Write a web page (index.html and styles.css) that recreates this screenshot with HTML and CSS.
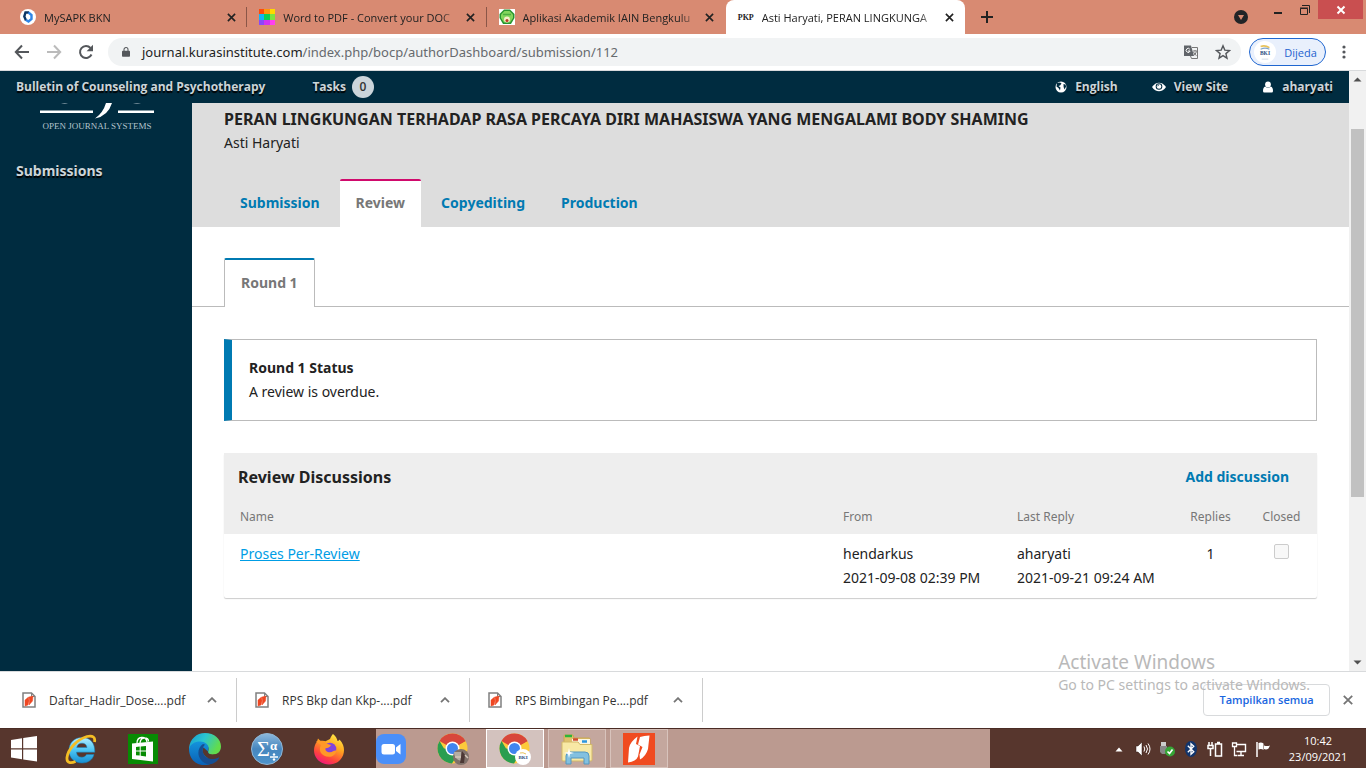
FILE: index.html
```
<!DOCTYPE html>
<html lang="en">
<head>
  <meta charset="UTF-8">
  <title>Asti Haryati, PERAN LINGKUNGAN</title>
  <link rel="stylesheet" href="styles.css">
</head>
<body>

<!-- tabs -->
<div class="tabstrip">
  <div class="tabs">
    <div class="tab">
      <svg class="favicon" viewBox="0 0 16 16"><circle cx="8" cy="8" r="8" fill="#fff"/><path d="M9 3.500H5.500L4.300 7.500 6 11.500" fill="none" stroke="#0b3564" stroke-width="2.400"/><path d="M8.500 3.500l3 2.500v4l-3 2.500L6 11" fill="none" stroke="#2f86e8" stroke-width="2.400"/></svg>
      <span class="tab-title">MySAPK BKN</span>
      <button class="tab-close" aria-label="Close"><svg viewBox="0 0 10 10"><path d="M1 1l8 8M9 1l-8 8"/></svg></button>
    </div>
    <div class="tab">
      <svg class="favicon" viewBox="0 0 16 16"><path d="M0 0h5v5H0z" fill="#ff4b0a"/><path d="M5 0h6v5H5z" fill="#ff960a"/><path d="M11 0h5v5h-5z" fill="#ffd800"/><path d="M0 5h5v6H0z" fill="#12b4f5"/><path d="M5 5h6v6H5z" fill="#0bcf55"/><path d="M11 5h5v6h-5z" fill="#7fe33f"/><path d="M0 11h5v5H0z" fill="#8a48f8"/><path d="M5 11h6v5H5z" fill="#d033f0"/><path d="M11 11h5v5h-5z" fill="#ff40f0"/></svg>
      <span class="tab-title">Word to PDF - Convert your DOC</span>
      <button class="tab-close" aria-label="Close"><svg viewBox="0 0 10 10"><path d="M1 1l8 8M9 1l-8 8"/></svg></button>
    </div>
    <div class="tab">
      <svg class="favicon" viewBox="0 0 16 16"><path d="M0 0h16v16H0z" fill="#fff"/><path d="M5 .5h6L15.500 5v4L12 15H4L.5 9V5z" fill="#27942f"/><path d="M5.500 2h5L14 5.500V9l-3 4.500H5L2 9V5.500z" fill="#83d65c"/><path d="M4 5.500h8" stroke="#4caf40" stroke-width="1.500"/><circle cx="8" cy="10.500" r="3" fill="#f4efc9"/><circle cx="8" cy="11.500" r="1.500" fill="#b63a24"/></svg>
      <span class="tab-title">Aplikasi Akademik IAIN Bengkulu</span>
      <button class="tab-close" aria-label="Close"><svg viewBox="0 0 10 10"><path d="M1 1l8 8M9 1l-8 8"/></svg></button>
    </div>
    <div class="tab active">
      <span class="pkp">PKP</span>
      <span class="tab-title">Asti Haryati, PERAN LINGKUNGA</span>
      <button class="tab-close" aria-label="Close"><svg viewBox="0 0 10 10"><path d="M1 1l8 8M9 1l-8 8"/></svg></button>
    </div>
  </div>
  <button class="new-tab" aria-label="New tab"><svg viewBox="0 0 12 12"><path d="M6 0v12M0 6h12" stroke="#222" stroke-width="2"/></svg></button>
  <div class="window-buttons">
    <button class="media" aria-label="Search tabs"><svg viewBox="0 0 14 14"><circle cx="7" cy="7" r="7" fill="#222427"/><path d="M4 5h6L7 10z" fill="#d88a72"/></svg></button>
    <button class="win" aria-label="Minimize"><svg viewBox="0 0 10 10"><path d="M1 8h8" stroke="#222" stroke-width="2"/></svg></button>
    <button class="win" aria-label="Restore"><svg viewBox="0 0 10 10"><path d="M.5 3.500h7v6h-7zM2 .5h7.500V8" fill="none" stroke="#222"/><path d="M0 3h8" stroke="#222"/></svg></button>
    <button class="win close" aria-label="Close window"><svg viewBox="0 0 10 10"><path d="M1.500 1.500l7 7M8.500 1.500l-7 7" stroke="#fff" stroke-width="2"/></svg></button>
  </div>
</div>

<!-- address bar -->
<div class="toolbar">
  <button class="nav-btn" aria-label="Back"><svg viewBox="0 0 16 16"><path d="M15 8H2M8 1.500L1.800 8 8 14.500" fill="none" stroke="#54575b" stroke-width="2"/></svg></button>
  <button class="nav-btn" aria-label="Forward"><svg viewBox="0 0 16 16"><path d="M1 8h13M8 1.500L14.200 8 8 14.500" fill="none" stroke="#bbb" stroke-width="2"/></svg></button>
  <button class="nav-btn" aria-label="Reload"><svg viewBox="0 0 16 16"><path d="M13.500 10.500A6 6 0 1 1 12.500 4" fill="none" stroke="#54575b" stroke-width="2"/><path d="M15 .8v6.400H8.600z" fill="#54575b"/></svg></button>
  <div class="omnibox">
    <svg class="lock" viewBox="0 0 10 12"><path d="M1 4.500h8q1 0 1 1V11q0 1-1 1H1q-1 0-1-1V5.500q0-1 1-1z" fill="#54575b"/><path d="M2.500 5V3a2.500 2.500 0 0 1 5 0v2" fill="none" stroke="#54575b" stroke-width="1.300"/></svg>
    <a class="url" href="#">journal.kurasinstitute.com<span>/index.php/bocp/authorDashboard/submission/112</span></a>
    <svg class="omni-icon" viewBox="0 0 16 16"><path d="M1 1.500h7l3 10.500H1z" fill="#606469"/><path d="M9 3.500h5.500v11H8.500l-1-2.500" fill="none" stroke="#777"/><path d="M10 7h4M12 6v1M13.500 7.500q-1 3-3 4M10.500 8q1 2.500 3 3.500" fill="none" stroke="#777"/><path d="M6.800 5.200a2 2 0 1 0 .3 1.800H5" fill="none" stroke="#fff"/></svg>
    <svg class="omni-icon" viewBox="0 0 16 16"><path d="M8 1.800l1.800 4.300 4.700.4-3.600 3.100 1.100 4.600L8 11.700l-4 2.500 1.100-4.600-3.600-3.100 4.700-.4z" fill="none" stroke="#54575b" stroke-width="1.400"/></svg>
  </div>
  <button class="profile"><svg viewBox="0 0 20 20"><circle cx="10" cy="10" r="10" fill="#fff"/><path d="M6 5q4-1.500 8 1" fill="none" stroke="#e8c35c" stroke-width="1.500"/><path d="M6 7.500q4-2 8 0" fill="none" stroke="#80a4c8"/><text x="10" y="13" text-anchor="middle" class="bki">BKI</text><path d="M7 16.500h6" stroke="#bccbdc" stroke-width=".6"/></svg>Dijeda</button>
  <button class="menu" aria-label="Menu"><svg viewBox="0 0 4 14"><circle cx="2" cy="2" r="1.600"/><circle cx="2" cy="7" r="1.600"/><circle cx="2" cy="12" r="1.600"/></svg></button>
</div>

<!-- page -->
<div class="viewport">
  <div class="page">
    <div class="topbar">
      <a class="site-name" href="#">Bulletin of Counseling and Psychotherapy</a>
      <a class="tasks" href="#">Tasks <span>0</span></a>
      <div class="user-nav">
        <a href="#"><svg viewBox="0 0 12 12"><circle cx="6" cy="6" r="5.500"/><path d="M2 2l3-.6 1.500 1.200L5 4.500 3.500 5l2 1.500L5 9.500 3.500 7 1.500 5.500zM8.500 3l2 .5.600 2-1.500 3-1-2.500z" fill="#002c40"/></svg>English</a>
        <a href="#"><svg viewBox="0 0 14 12"><path d="M0 6q3-4.300 7-4.300T14 6q-3 4.300-7 4.300T0 6z"/><circle cx="7" cy="5.500" r="3.300" fill="#002c40"/><circle cx="7" cy="5.500" r="2.300"/><path d="M5.700 5.300a1.300 1.300 0 0 1 1.300-1.300" fill="none" stroke="#002c40" stroke-width=".7"/></svg>View Site</a>
        <a href="#"><svg viewBox="0 0 12 12"><circle cx="6" cy="3.500" r="2.900"/><path d="M3.300 5.500Q6 8 8.700 5.500 11 6 11 10q0 1.500-1.300 1.500H2.300Q1 11.500 1 10 1 6 3.300 5.500z"/></svg>aharyati</a>
      </div>
    </div>
    <div class="columns">
      <div class="sidebar">
        <a class="logo" href="#" aria-label="Open Journal Systems">
          <svg viewBox="0 0 114 28"><path d="M21 0h7q-3 1.500-7 0zM93 0h8q-4 1.500-8 0z" fill="#91a6b0"/><path d="M0 7.500h53v2.500H0zM78 7.500h36v2.500H78z" fill="#fff"/><path d="M66 0h6q-4 13-17 15.500Q63 10 66 0z" fill="#fff"/><text x="57" y="25.500" text-anchor="middle" class="logo-text">OPEN JOURNAL SYSTEMS</text></svg>
        </a>
        <a class="side-link" href="#">Submissions</a>
      </div>
      <div class="main">
        <div class="work-header">
          <h1>PERAN LINGKUNGAN TERHADAP RASA PERCAYA DIRI MAHASISWA YANG MENGALAMI BODY SHAMING</h1>
          <p>Asti Haryati</p>
          <div class="stages">
            <a href="#">Submission</a>
            <a href="#" class="current">Review</a>
            <a href="#">Copyediting</a>
            <a href="#">Production</a>
          </div>
        </div>
        <div class="rounds"><a href="#">Round 1</a></div>
        <div class="content">
          <div class="status">
            <h2>Round 1 Status</h2>
            <p>A review is overdue.</p>
          </div>
          <div class="grid">
            <div class="grid-head">
              <h2>Review Discussions</h2>
              <a href="#">Add discussion</a>
            </div>
            <table>
              <thead>
                <tr><th>Name</th><th class="col-date">From</th><th class="col-date">Last Reply</th><th class="col-small">Replies</th><th class="col-small">Closed</th></tr>
              </thead>
              <tbody>
                <tr>
                  <td><a href="#">Proses Per-Review</a></td>
                  <td>hendarkus<br>2021-09-08 02:39 PM</td>
                  <td>aharyati<br>2021-09-21 09:24 AM</td>
                  <td class="center">1</td>
                  <td class="center"><input type="checkbox" aria-label="Closed" disabled></td>
                </tr>
              </tbody>
            </table>
          </div>
        </div>
      </div>
    </div>
  </div>
  <div class="scrollbar">
    <svg viewBox="0 0 17 17"><path d="M4.500 10.500h8l-4-4z" fill="#505050"/></svg>
    <div class="track"><div class="thumb"></div></div>
    <svg viewBox="0 0 17 17"><path d="M4.500 6.500h8l-4 4z" fill="#505050"/></svg>
  </div>
</div>

<!-- downloads -->
<div class="downloads">
  <div class="download">
    <svg class="pdf" viewBox="0 0 14 16"><path d="M1 1h8.500L13 4.500V15H1z" fill="#fff" stroke="#808080" stroke-width="1.500"/><path d="M9.500 1v3.500H13" fill="none" stroke="#808080"/><path d="M6.500 5L3 8v6l3-1 1-4zM7 5l4-1-.5 5-3.500 4 .5-4z" fill="#ee4722" stroke="#ee4722" stroke-width=".5"/></svg>
    <a href="#">Daftar_Hadir_Dose....pdf</a>
    <button aria-label="Options"><svg viewBox="0 0 10 6"><path d="M1 5.200l4-4 4 4" fill="none" stroke="#757575" stroke-width="1.800"/></svg></button>
  </div>
  <div class="download">
    <svg class="pdf" viewBox="0 0 14 16"><path d="M1 1h8.500L13 4.500V15H1z" fill="#fff" stroke="#808080" stroke-width="1.500"/><path d="M9.500 1v3.500H13" fill="none" stroke="#808080"/><path d="M6.500 5L3 8v6l3-1 1-4zM7 5l4-1-.5 5-3.500 4 .5-4z" fill="#ee4722" stroke="#ee4722" stroke-width=".5"/></svg>
    <a href="#">RPS Bkp dan Kkp-....pdf</a>
    <button aria-label="Options"><svg viewBox="0 0 10 6"><path d="M1 5.200l4-4 4 4" fill="none" stroke="#757575" stroke-width="1.800"/></svg></button>
  </div>
  <div class="download">
    <svg class="pdf" viewBox="0 0 14 16"><path d="M1 1h8.500L13 4.500V15H1z" fill="#fff" stroke="#808080" stroke-width="1.500"/><path d="M9.500 1v3.500H13" fill="none" stroke="#808080"/><path d="M6.500 5L3 8v6l3-1 1-4zM7 5l4-1-.5 5-3.500 4 .5-4z" fill="#ee4722" stroke="#ee4722" stroke-width=".5"/></svg>
    <a href="#">RPS Bimbingan Pe....pdf</a>
    <button aria-label="Options"><svg viewBox="0 0 10 6"><path d="M1 5.200l4-4 4 4" fill="none" stroke="#757575" stroke-width="1.800"/></svg></button>
  </div>
  <button class="show-all">Tampilkan semua</button>
  <button class="close-bar" aria-label="Close"><svg viewBox="0 0 10 10"><path d="M.8.800l8.400 8.400M9.200.800L.8 9.200" stroke="#757575" stroke-width="1.800"/></svg></button>
</div>

<!-- taskbar -->
<div class="taskbar">
  <button class="start" aria-label="Start"><svg width="26" height="26" viewBox="0 0 26 26" fill="#fff"><path d="M0 4l11-1.700V12.300H0zM12.200 2.100L26 0v12.300H12.200zM0 13.500h11v9.800L0 21.600zM12.200 13.500H26V25.500l-13.800-2z"/></svg></button>
  <button aria-label="Internet Explorer"><svg width="32" height="32" viewBox="0 0 32 32">
    <defs><linearGradient id="ie" x1="0" y1="0" x2="0" y2="1"><stop offset="0" stop-color="#b5edff"/><stop offset=".5" stop-color="#4cc5f4"/><stop offset="1" stop-color="#168ed2"/></linearGradient></defs>
    <path d="M17 4.500C9 4.500 4 10 4 17.500S9.500 30 17 30c6 0 10.500-3 12-8.500h-7.500c-1 2-2.500 2.700-4.500 2.700-3.500 0-5.300-2-5.500-5H29.800C30 10 25.500 4.500 17 4.500zm-5.300 10c.6-2.800 2.500-4.300 5.300-4.300s4.600 1.500 5 4.300z" fill="url(#ie)" stroke="#1481b8" stroke-width=".5"/>
    <path d="M29.500 9C30.500 4.500 28 2 22 3.500 12 6.500 3 16 2 24.500c-.5 5 3 6.500 8.500 4" fill="none" stroke="#f4bd24" stroke-width="2.800"/></svg></button>
  <button aria-label="Store"><svg width="30" height="30" viewBox="0 0 30 30"><path d="M0 0h30v30H0z" fill="#078b03"/><path d="M4 9.500L25 7.500v20L4 25z" fill="#fff"/><path d="M9 9q0-5 4.500-5.500T19 8M12 9q.5-5 4.500-5t4 3.500" fill="none" stroke="#fff" stroke-width="1.300"/><path d="M8 13l3.700-.4v4H8zM12.700 12.500L18 12v4.600h-5.300zM8 17.600h3.700v4L8 21.200zM12.700 17.600H18v4.800l-5.300-.6z" fill="#078b03"/></svg></button>
  <button aria-label="Edge"><svg width="32" height="32" viewBox="0 0 32 32">
    <defs><linearGradient id="e1" x1="0" y1="0" x2="1" y2=".4"><stop offset="0" stop-color="#159bd2"/><stop offset=".5" stop-color="#2bc5d0"/><stop offset="1" stop-color="#62dc4c"/></linearGradient><linearGradient id="e2" x1="0" y1="0" x2="0" y2="1"><stop offset="0" stop-color="#1493dc"/><stop offset="1" stop-color="#0a60b4"/></linearGradient></defs>
    <path d="M0 15C1 6 7.500 0 16 0c9.500 0 16 6 16 13.500 0 5-3.500 8-8 8-3.500 0-5.800-1.300-5-3 1.500-3 .5-7.500-6-7.500C7 11 2 13 0 17z" fill="url(#e1)"/>
    <path d="M0 16c1-5 6-7.500 11-7.500 5.500 0 9 3.500 8.500 7-.7 4 .5 6 .5 6l-3 6.500 4 3.300C8 35 0 26 0 16z" fill="url(#e2)"/>
    <path d="M14 11C8.500 15 8 22 12 27c4 4.500 9 5.500 13 3 3-1.500 5-4 5.200-5.500-.5-.8-2 .5-4 1-7 1.500-12.500-2.500-12.500-8 0-3 1-5 2.500-5.700z" fill="#174e91"/>
    <path d="M14.500 14.500c-2 4 0 8.500 5 10.500 4 1.500 8 .5 10-.5-1-1.200-1.500-3-4-3-4 .6-7-1-6.500-3z" fill="#57362d"/></svg></button>
  <button aria-label="Math Input"><svg width="32" height="32" viewBox="0 0 32 32">
    <defs><linearGradient id="sg" x1="0" y1="0" x2="0" y2="1"><stop offset="0" stop-color="#8db8dc"/><stop offset=".5" stop-color="#4686be"/><stop offset="1" stop-color="#4f95cc"/></linearGradient></defs>
    <circle cx="16" cy="16" r="15.500" fill="url(#sg)" stroke="#91b7d4"/><text x="6" y="23" class="sigma">Σ</text><text x="19" y="17" class="alpha">α</text><path d="M19 24h8" stroke="#fff" stroke-width="1.500"/><circle cx="23" cy="21.500" r="1.200" fill="#fff"/><circle cx="23" cy="26.500" r="1.200" fill="#fff"/></svg></button>
  <button aria-label="Firefox"><svg width="32" height="32" viewBox="0 0 32 32">
    <defs><linearGradient id="ff" x1=".8" y1="0" x2=".3" y2="1"><stop offset="0" stop-color="#fff04a"/><stop offset=".4" stop-color="#ffa51f"/><stop offset=".75" stop-color="#ff453d"/><stop offset="1" stop-color="#f0167f"/></linearGradient></defs>
    <path d="M20 1c3 2.500 4 4.500 4.500 7 1.500-.3 2-1.500 2-1.500C30 10 31 14 31 17c0 8.500-6.500 14.500-15 14.500S1 25 1 17.500c0-3.500 1-6.500 3-9l1-3 2.500 2.500c2-.5 4-.2 5 .3L17 6c1-2.500 2-4 3-5z" fill="url(#ff)"/>
    <circle cx="17" cy="16" r="6.300" fill="#8143dc"/><path d="M3 8.500c4-1.500 8-1 10 2l5 1.500c-1 2.500-3.500 3-5.500 3.200-.5 2 1 4 4.500 4 3 0 4-2.500 6.500-1.500-1 4-4 6-7.500 6C8 23.700 5 17 8 12z" fill="#ff9828"/></svg></button>
  <button aria-label="Zoom"><svg width="30" height="30" viewBox="0 0 30 30"><rect width="30" height="30" rx="8" fill="#4a8ff9"/><rect x="5.500" y="10" width="13.500" height="10.500" rx="2.500" fill="#fff"/><path d="M20 13.500l4.500-3.500v10.500L20 17z" fill="#fff"/></svg></button>
  <button aria-label="Chrome"><svg width="32" height="32" viewBox="0 0 32 32"><circle cx="15.500" cy="15.500" r="15" fill="#fcca3c"/><path d="M15.500 15.500L2.500 8A15 15 0 0 1 28.500 8z" fill="#d8473b"/><path d="M15.500 8H28.500L15.500 15z" fill="#d8473b"/><path d="M2.500 8A15 15 0 0 0 15 30.500L22 19 15.500 15.500H7z" fill="#2a9e50"/><circle cx="15.500" cy="15.500" r="7" fill="#fff"/><circle cx="15.500" cy="15.500" r="5.500" fill="#4185ef"/><circle cx="24" cy="24" r="8" fill="#80716a"/><path d="M17 19h7v9q-7-2-7-9z" fill="#b5aea4"/><path d="M25 18l3 4-1 8h-4z" fill="#4c3835"/><path d="M18 24h6M28 22l3 3" stroke="#d3c5b8" stroke-width="1.500"/></svg></button>
  <button class="open focused" aria-label="Chrome window"><svg width="32" height="32" viewBox="0 0 32 32"><circle cx="15.500" cy="15.500" r="15" fill="#fcca3c"/><path d="M15.500 15.500L2.500 8A15 15 0 0 1 28.500 8z" fill="#d8473b"/><path d="M15.500 8H28.500L15.500 15z" fill="#d8473b"/><path d="M2.500 8A15 15 0 0 0 15 30.500L22 19 15.500 15.500H7z" fill="#2a9e50"/><circle cx="15.500" cy="15.500" r="7" fill="#fff"/><circle cx="15.500" cy="15.500" r="5.500" fill="#4185ef"/><circle cx="24" cy="24" r="8" fill="#fff"/><path d="M21 20q3-1 6 1" fill="none" stroke="#e8c35c"/><text x="24" y="26" text-anchor="middle" class="bki">BKI</text></svg></button>
  <button class="open" aria-label="File Explorer"><svg width="32" height="32" viewBox="0 0 32 32">
    <path d="M3 6V3q0-1 1-1h8l1 3h15q1 0 1 1v20H3z" fill="#dfc16c" stroke="#c8a752"/><path d="M4 3h7" stroke="#2db53a" stroke-width="2.500"/><path d="M11 6h18v5H11z" fill="#faf6e2"/><path d="M12 6.500h5" stroke="#d34b31" stroke-width="2.500"/><path d="M21 8.500h5" stroke="#2e96df" stroke-width="2.500"/><path d="M1 9h16l2 2.500h12V27q0 1-1 1H2q-1 0-1-1z" fill="#f8e9a5" stroke="#d3b968"/><path d="M5 31V23q0-4 4-4h15q4 0 4 4v8h-5v-6H10v6z" fill="#82c0e0" stroke="#5597c0"/><path d="M8 15l1 4 4 1-4 1-1 4-1-4-4-1 4-1z" fill="#fff"/></svg></button>
  <button class="open" aria-label="Nitro"><svg width="32" height="32" viewBox="0 0 32 32"><path d="M0 0h32v32H0z" fill="#f04b20"/><path d="M14.500 3.500Q7 9 6 15L5 29.500q8-1 10-6L17 13l-4-2z" fill="#fff"/><path d="M17 4q4-1.500 9.500-1.500L25 16q-2 7-8 10.500l-.5-5L19.500 14 15 11.500z" fill="#fff"/></svg></button>

  <div class="tray">
    <svg viewBox="0 0 16 16"><path d="M4.500 10.500h7l-3.500-4z" fill="#fff"/></svg>
    <svg viewBox="0 0 16 16"><path d="M1 5h2l4-4v14l-4-4H1z" fill="#fff" stroke="#2c1a15" stroke-width=".5"/><path d="M9 5.500q1.500 2.500 0 5M11 4q3 4 0 8M13 2.500q4 5.500 0 11" fill="none" stroke="#fff"/></svg>
    <svg viewBox="0 0 16 16"><path d="M2 1h5v4H2z" fill="#ccc"/><path d="M1 5h7v6l-2 2H3l-2-2z" fill="#888"/><circle cx="11" cy="10.500" r="5" fill="#35a535"/><path d="M8.500 10.500l2 2 3-4" fill="none" stroke="#fff" stroke-width="1.700"/></svg>
    <svg viewBox="0 0 16 16"><ellipse cx="8" cy="8" rx="6" ry="8" fill="#12356c"/><path d="M4.800 4.800l6 6L8 13.300V2.700l2.800 2.500-6 6" fill="none" stroke="#fff" stroke-width="1.300"/></svg>
    <svg viewBox="0 0 16 16"><path d="M2 1v3M5 1v3M1 4.500h5v3H1zM3.500 7v8" fill="none" stroke="#fff" stroke-width="1.500"/><path d="M8.500 3h6v12h-6zM10 1.500h3" fill="none" stroke="#fff" stroke-width="1.500"/></svg>
    <svg viewBox="0 0 16 16"><path d="M5.500 3.500h9v7h-9M7 14.500h6M10 11v3" fill="none" stroke="#fff" stroke-width="1.400"/><path d="M1.500 2h4v3.500h-4zM3.500 5.500v9h3" fill="none" stroke="#fff" stroke-width="1.300"/></svg>
    <svg viewBox="0 0 16 16"><path d="M2 1v15" stroke="#fff" stroke-width="1.500"/><path d="M3.500 2q3-1 5 .5V9q-2-1.500-5-.5zM9 4.500q3 1 6 0l-1.500 3q-2 1.500-4.500.5z" fill="#fff"/></svg>
  </div>
  <div class="clock">10:42<br>23/09/2021</div>
</div>

<div class="watermark">
  <p class="wm-title">Activate Windows</p>
  <p>Go to PC settings to activate Windows.</p>
</div>

</body>
</html>
```
FILE: styles.css
```
* {
  box-sizing: border-box;
  margin: 0;
  padding: 0;
}

body {
  display: flex;
  flex-direction: column;
  min-height: 100vh;
  position: relative;
  font-family: "Open Sans", sans-serif;
  font-size: 12px;
  color: #222;
  background: #fff;
}

a {
  color: inherit;
  text-decoration: none;
}

button {
  border: 0;
  background: none;
  font: inherit;
  color: inherit;
  display: flex;
  align-items: center;
  justify-content: center;
}

svg {
  display: block;
  flex: none;
}

/* tab strip */
.tabstrip {
  display: flex;
  height: 34px;
  padding-left: 8px;
  background: #d88a72;
}

.tabs {
  display: flex;
  flex: 0 1 957px;
  min-width: 0;
}

.tab {
  flex: 1;
  min-width: 0;
  display: flex;
  align-items: center;
  padding: 0 10px 0 12px;
  font-size: 11px;
  background: linear-gradient(#8b5648, #8b5648) right center / 1px 20px no-repeat;
}

.favicon {
  width: 16px;
  height: 16px;
}

.tab-title {
  flex: 1;
  margin: 0 5px 0 8px;
  white-space: nowrap;
  overflow: hidden;
  -webkit-mask-image: linear-gradient(to left, transparent, #000 20px);
  mask-image: linear-gradient(to left, transparent, #000 20px);
}

.tab-close {
  width: 12px;
  height: 16px;
}

.tab-close svg {
  width: 9px;
  height: 9px;
  stroke: #222;
  stroke-width: 1.8;
}

.tab:nth-child(3) {
  background: none;
}

.tab.active {
  background: #fff;
  border-radius: 8px 8px 0 0;
}

.pkp {
  width: 16px;
  font: bold 8px "Liberation Serif", serif;
}

.new-tab {
  width: 44px;
}

.new-tab svg {
  width: 12px;
  height: 12px;
}

.window-buttons {
  display: flex;
  align-items: flex-start;
  margin-left: auto;
  padding-right: 3px;
}

.media {
  width: 46px;
  height: 34px;
}

.media svg {
  width: 14px;
  height: 14px;
}

.win {
  width: 27px;
  height: 19px;
}

.win svg {
  width: 10px;
  height: 10px;
}

.win.close {
  width: 45px;
  background: #c94f50;
}

/* address bar */
.toolbar {
  display: flex;
  align-items: center;
  height: 37px;
  padding: 0 14px 0 6px;
  border-bottom: 1px solid #d8dadc;
}

.nav-btn {
  width: 32px;
  height: 28px;
}

.nav-btn svg {
  width: 16px;
  height: 16px;
}

.omnibox {
  flex: 1;
  display: flex;
  align-items: center;
  gap: 16px;
  height: 28px;
  margin: 0 8px 0 6px;
  padding: 0 10px 0 14px;
  border-radius: 14px;
  background: #f1f3f4;
}

.lock {
  width: 8px;
  height: 12px;
}

.url {
  flex: 1;
  margin-left: -4px;
  font-family: "Noto Sans", sans-serif;
  font-size: 13px;
  white-space: nowrap;
}

.url span {
  color: #666a6e;
}

.omni-icon {
  width: 16px;
  height: 16px;
}

.profile {
  width: 77px;
  height: 28px;
  gap: 8px;
  padding-right: 4px;
  border: 1px solid #1f66d0;
  border-radius: 14px;
  background: #e9f0fc;
  color: #1c62cf;
  font-size: 11px;
}

.profile svg {
  width: 22px;
  height: 22px;
}

.bki {
  font: bold 5px "Liberation Serif", serif;
  fill: #2b4d80;
}

.menu {
  width: 16px;
  height: 28px;
  margin-left: 10px;
}

.menu svg {
  width: 4px;
  height: 14px;
  fill: #54575b;
}

/* page */
.viewport {
  flex: 1;
  display: flex;
}

.page {
  flex: 1;
  min-width: 0;
  display: flex;
  flex-direction: column;
  font-family: "Noto Sans", sans-serif;
  font-size: 14px;
  line-height: 24px;
}

.topbar {
  display: flex;
  align-items: center;
  height: 32px;
  padding: 0 16px;
  background: #002c40;
  color: #ccd5d9;
  font-family: "Open Sans", sans-serif;
  font-size: 12px;
  font-weight: 700;
  text-shadow: 0 2px 1px #000;
}

.tasks {
  display: flex;
  align-items: center;
  gap: 6px;
  margin-left: 47px;
}

.tasks span {
  width: 22px;
  height: 22px;
  border-radius: 50%;
  background: #ccd5db;
  color: #333;
  line-height: 22px;
  text-align: center;
  text-shadow: none;
  font-weight: 600;
}

.user-nav {
  display: flex;
  gap: 34px;
  margin-left: auto;
}

.user-nav a {
  display: flex;
  align-items: center;
  gap: 8px;
}

.user-nav svg {
  height: 12px;
  fill: #fff;
}

.columns {
  flex: 1;
  display: flex;
}

.sidebar {
  width: 192px;
  background: #002c40;
  color: #ccd5d9;
}

.logo {
  display: block;
  margin-left: 40px;
}

.logo svg {
  width: 114px;
  height: 28px;
}

.logo-text {
  font: 9px "Liberation Serif", serif;
  fill: #b5c4cc;
}

.side-link {
  display: block;
  padding: 28px 16px;
  font-weight: bold;
  text-shadow: 0 2px 1px #000;
}

.main {
  flex: 1;
  min-width: 0;
}

.work-header {
  padding: 4px 32px 0;
  background: #ddd;
}

.work-header h1 {
  font-size: 16px;
  line-height: 24px;
}

.stages {
  display: flex;
  margin-top: 24px;
}

.stages a {
  padding: 12px 16px;
  color: #007ab2;
  font-weight: bold;
}

.stages a + a {
  margin-left: 4px;
}

.stages a.current {
  padding-top: 10px;
  border-top: 2px solid #d00a6c;
  border-radius: 2px 2px 0 0;
  background: #fff;
  color: #777;
}

.rounds {
  display: flex;
  padding: 31px 32px 0;
  border-bottom: 1px solid #bbb;
}

.rounds a {
  margin-bottom: -1px;
  padding: 11px 16px 12px;
  border: 1px solid #bbb;
  border-top: 2px solid #007ab2;
  border-bottom: 0;
  border-radius: 2px 2px 0 0;
  background: #fff;
  color: #777;
  font-weight: bold;
}

.content {
  padding: 32px;
}

.status {
  padding: 16px 17px;
  border: 1px solid #bbb;
  border-left: 8px solid #007ab2;
}

.status h2 {
  font-size: 14px;
  line-height: 24px;
}

.grid {
  margin-top: 32px;
  border-radius: 2px;
  box-shadow: 0 1px 1px rgba(0, 0, 0, 0.2);
}

.grid-head {
  display: flex;
  align-items: center;
  justify-content: space-between;
  padding: 12px 28px 12px 14px;
  background: #eee;
}

.grid-head h2 {
  font-size: 16px;
}

.grid-head a {
  color: #007ab2;
  font-weight: bold;
}

table {
  width: 100%;
  table-layout: fixed;
  border-collapse: collapse;
}

th {
  padding: 4px 16px 5px;
  background: #eee;
  color: #777;
  font-size: 12px;
  font-weight: normal;
  text-align: left;
}

.col-date {
  width: 174px;
}

.col-small {
  width: 71px;
  padding: 4px 0 5px;
  text-align: center;
}

td {
  padding: 8px 16px;
  vertical-align: top;
  white-space: nowrap;
}

td a {
  color: #009de5;
  text-decoration: underline;
}

.center {
  padding: 8px 0;
  text-align: center;
}

.center input {
  appearance: none;
  width: 15px;
  height: 15px;
  border: 1px solid #ccc;
  border-radius: 2px;
  background: #f8f8f8;
}

.scrollbar {
  width: 17px;
  display: flex;
  flex-direction: column;
  background: #f1f1f1;
}

.scrollbar svg {
  width: 17px;
  height: 17px;
}

.track {
  flex: 1;
  padding: 41px 2px 0;
}

.thumb {
  height: 70%;
  background: #c1c1c1;
}

/* downloads */
.downloads {
  display: flex;
  align-items: center;
  height: 57px;
  padding-right: 10px;
  border-top: 1px solid #d8dadc;
}

.download {
  display: flex;
  align-items: center;
  width: 233px;
  height: 44px;
  padding: 0 14px 0 18px;
  border-right: 1px solid #ccc;
}

.download:first-child {
  width: 237px;
  padding-left: 22px;
}

.pdf {
  width: 14px;
  height: 16px;
}

.download a {
  flex: 1;
  margin-left: 13px;
  color: #333;
  white-space: nowrap;
}

.download button {
  width: 20px;
  height: 24px;
}

.download button svg {
  width: 10px;
  height: 6px;
}

.show-all {
  width: 127px;
  height: 32px;
  margin-left: auto;
  padding-bottom: 2px;
  border: 1px solid #d8dadc;
  border-radius: 4px;
  color: #1a66e0;
  font-size: 11px;
  font-weight: 600;
}

.close-bar {
  width: 16px;
  height: 32px;
  margin-left: 10px;
}

.close-bar svg {
  width: 10px;
  height: 10px;
}

/* taskbar */
.taskbar {
  display: flex;
  align-items: stretch;
  gap: 4px;
  height: 40px;
  border-top: 1px solid #4a2c25;
  background: linear-gradient(90deg, #57362d 376px, #bb9a90 376px 990px, #57362d 990px);
  color: #fff;
}

.taskbar button {
  width: 58px;
}

.taskbar .start {
  width: 48px;
}

.taskbar .open {
  border: 1px solid #d8c3bc;
  background: #c4a79e;
}

.taskbar .focused {
  border: 1px solid #fff;
  background: #d3c2be;
}

.sigma {
  font: 22px "Liberation Serif", serif;
  fill: #fff;
}

.alpha {
  font: bold 13px "Liberation Serif", serif;
  fill: #fff;
}

.tray {
  display: flex;
  align-items: center;
  gap: 8px;
  margin-left: auto;
}

.tray svg {
  width: 16px;
  height: 16px;
}

.clock {
  width: 91px;
  padding: 4px 5px 4px 0;
  font-size: 11px;
  line-height: 16px;
  text-align: center;
}

/* watermark lies over the page and the downloads bar */
.watermark {
  position: absolute;
  right: 56px;
  bottom: 73px;
  color: #b9b9b9;
  font-family: "Noto Sans", sans-serif;
  font-size: 14px;
  line-height: 20px;
  pointer-events: none;
}

.wm-title {
  font-size: 19px;
  line-height: 26px;
}
```
